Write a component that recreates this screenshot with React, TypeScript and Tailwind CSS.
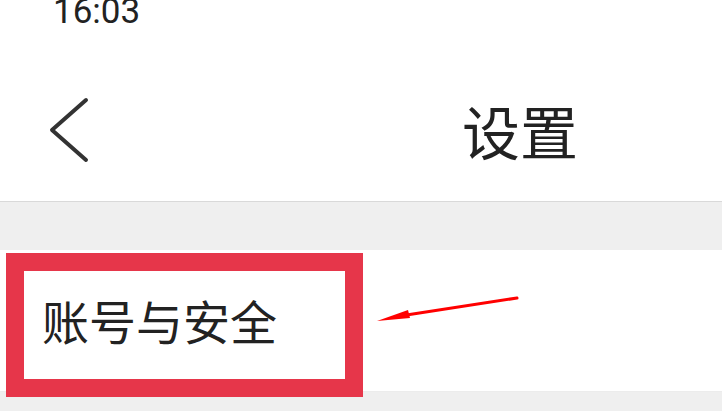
export default function App() {
  return (
    <div
      className="relative w-[722px] h-[411px] overflow-hidden bg-white text-[#222]"
      style={{ fontFamily: 'Roboto, "Noto Sans CJK SC", sans-serif' }}
    >
      <div className="h-[40px] overflow-hidden pl-[53px] text-[35px] leading-none">
        <div className="-mt-[6px]">16:03</div>
      </div>

      <div className="relative flex h-[162px] items-center border-b border-[#d9d9d9] pt-[18px]">
        <svg className="ml-[48px]" width="42" height="66" viewBox="0 0 42 66">
          <path
            d="M38 3 L4 33 L38 63"
            fill="none"
            stroke="#333"
            strokeWidth="4"
            strokeLinecap="round"
            strokeLinejoin="round"
          />
        </svg>
        <div className="ml-[372px] text-[58px] leading-none" style={{ fontFamily: '"Noto Sans CJK SC", sans-serif' }}>
          设置
        </div>
      </div>

      <div className="h-[48px] bg-[#efefef]" />

      <div
        className="flex h-[141px] items-center bg-white pl-[42px] text-[47px]"
        style={{ fontFamily: '"Noto Sans CJK SC", sans-serif' }}
      >
        账号与安全
      </div>

      <div className="h-[20px] border-t border-[#ececec] bg-[#efefef]" />

      <div className="absolute left-[6px] top-[253px] h-[144px] w-[357px] border-[18px] border-[#e6364a]" />

      <svg className="absolute left-[370px] top-[290px]" width="155" height="40" viewBox="0 0 155 40">
        <path d="M147 8 L30 26" stroke="#ff0000" strokeWidth="3" strokeLinecap="round" />
        <path d="M7 31 L38 20 L40 28 Z" fill="#ff0000" />
      </svg>
    </div>
  );
}
